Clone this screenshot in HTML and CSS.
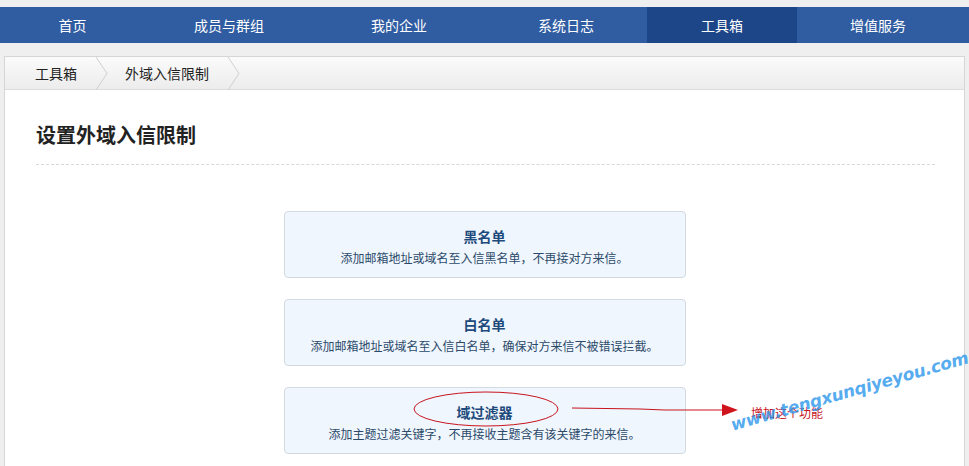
FILE: index.html
```html
<!DOCTYPE html>
<html lang="zh-CN">
<head>
    <meta charset="UTF-8">
    <title>设置外域入信限制</title>
    <link rel="stylesheet" href="styles.css">
</head>
<body>
    <div class="nav">
        <a class="nav-item w1" href="#">首页</a>
        <a class="nav-item w2" href="#">成员与群组</a>
        <a class="nav-item w3" href="#">我的企业</a>
        <a class="nav-item w4" href="#">系统日志</a>
        <a class="nav-item w5 active" href="#">工具箱</a>
        <a class="nav-item w6" href="#">增值服务</a>
    </div>

    <div class="panel">
        <div class="crumbs">
            <span class="crumb">工具箱</span>
            <svg class="sep" width="14" height="33" viewBox="0 0 14 33"><polyline points="1,0 12,16.5 1,33" fill="none" stroke="#cfcfcf" stroke-width="1"/></svg>
            <span class="crumb">外域入信限制</span>
            <svg class="sep" width="14" height="33" viewBox="0 0 14 33"><polyline points="1,0 12,16.5 1,33" fill="none" stroke="#cfcfcf" stroke-width="1"/></svg>
        </div>

        <div class="content">
            <h2 class="title">设置外域入信限制</h2>

            <div class="cards">
                <div class="card">
                    <div class="card-title">黑名单</div>
                    <div class="card-desc">添加邮箱地址或域名至入信黑名单，不再接对方来信。</div>
                </div>
                <div class="card">
                    <div class="card-title">白名单</div>
                    <div class="card-desc">添加邮箱地址或域名至入信白名单，确保对方来信不被错误拦截。</div>
                </div>
                <div class="card">
                    <div class="card-title">域过滤器</div>
                    <div class="card-desc">添加主题过滤关键字，不再接收主题含有该关键字的来信。</div>
                </div>
            </div>
        </div>
    </div>

    <!-- hand-drawn annotation on top of the screenshot -->
    <svg class="mark" width="969" height="466" viewBox="0 0 969 466">
        <ellipse cx="486" cy="409" rx="72" ry="17" fill="none" stroke="#c8141e" stroke-width="1"/>
        <path d="M572 408 L640 409 L665 410 L724 410" fill="none" stroke="#c8141e" stroke-width="1.2"/>
        <polygon points="722,404 738,410 722,416" fill="#d0141e"/>
    </svg>
    <span class="note">增加这个功能</span>
    <span class="watermark">www.tengxunqiyeyou.com</span>
</body>
</html>
```

FILE: styles.css
```css
body {
    margin: 0;
    padding-top: 7px;
    background: #efefef;
    font-family: "Noto Sans CJK SC", "Noto Sans", sans-serif;
    font-size: 12px;
    color: #333;
    height: 459px;
    overflow: hidden;
    position: relative;
}
.nav {
    display: flex;
    height: 36px;
    background: #305da2;
}
.nav-item {
    display: flex;
    align-items: center;
    justify-content: center;
    color: #fff;
    text-decoration: none;
    font-size: 14px;
}
.nav-item.active {
    background: #1d4688;
}
.w1 { width: 145px; }
.w2 { width: 168px; }
.w3 { width: 172px; }
.w4 { width: 162px; }
.w5 { width: 150px; }
.w6 { width: 162px; }

.panel {
    margin: 13px 4px 0 4px;
    background: #fff;
    border: 1px solid #d6d6d6;
    height: 420px;
}
.crumbs {
    display: flex;
    align-items: center;
    height: 32px;
    border-bottom: 1px solid #dcdcdc;
    background: linear-gradient(#fbfbfb, #ececec);
    padding-left: 30px;
}
.crumb {
    font-size: 14px;
    color: #222;
}
.sep {
    display: block;
    margin: 0 16px 0 18px;
}
.content {
    padding: 0 29px 0 31px;
}
.title {
    margin: 0;
    padding: 33px 0 17px;
    font-size: 20px;
    line-height: 24px;
    font-weight: bold;
    color: #222;
    border-bottom: 1px dashed #d8d8d8;
}
.cards {
    display: flex;
    flex-direction: column;
    align-items: center;
    gap: 21px;
    padding-top: 46px;
    padding-right: 2px;
}
.card {
    width: 400px;
    height: 65px;
    background: #f0f6fd;
    border: 1px solid #d3dae2;
    border-radius: 4px;
    text-align: center;
}
.card-title {
    padding-top: 14px;
    font-size: 14px;
    line-height: 20px;
    font-weight: bold;
    color: #1e4a7c;
}
.card-desc {
    margin-top: 4px;
    font-size: 12px;
    line-height: 16px;
    color: #2b4a6a;
}
.mark {
    position: absolute;
    left: 0;
    top: 0;
    pointer-events: none;
}
.note {
    position: absolute;
    left: 751px;
    top: 404px;
    font-size: 12px;
    color: #c8141e;
}
.watermark {
    position: absolute;
    left: 731px;
    top: 415px;
    font-family: "DejaVu Sans", sans-serif;
    font-size: 17px;
    letter-spacing: -0.3px;
    font-weight: bold;
    font-style: italic;
    color: rgba(40, 150, 235, 0.8);
    transform: rotate(-16deg);
    transform-origin: left center;
    white-space: nowrap;
}
```
